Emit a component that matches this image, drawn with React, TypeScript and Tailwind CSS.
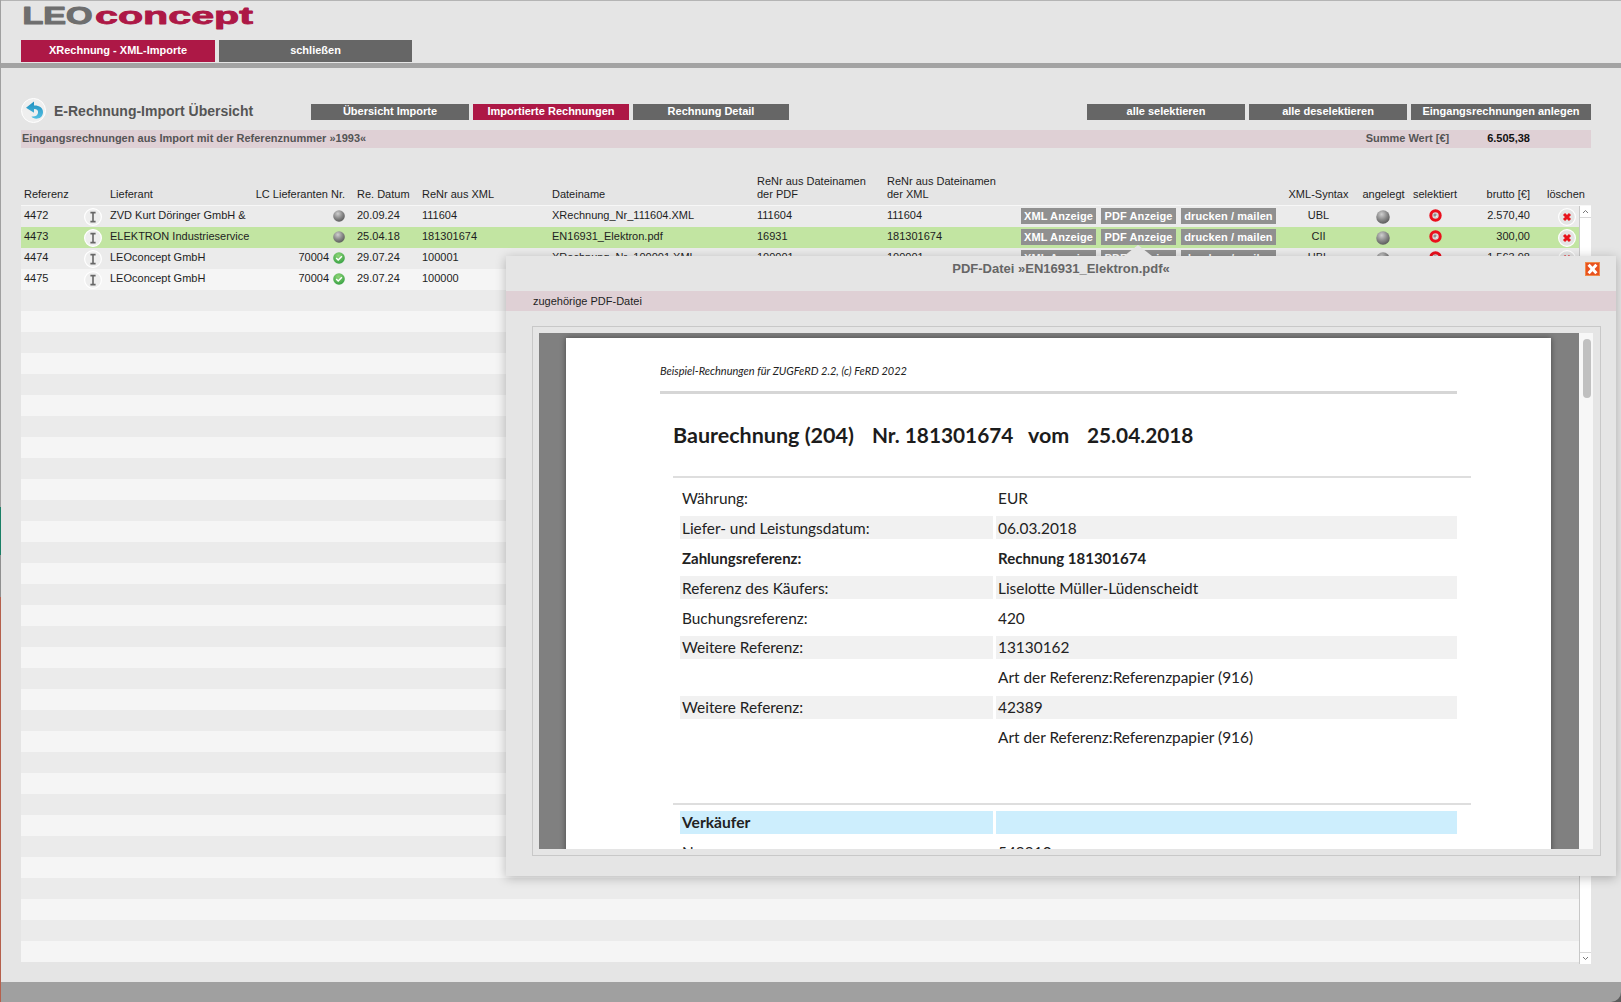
import React from "react";

const GRID =
  "grid grid-cols-[59px_27px_143px_95px_75px_130px_205px_130px_133px_264px_73px_55px_50px_70px_49px]";
const HEADGRID =
  "grid grid-cols-[59px_27px_143px_95px_75px_130px_205px_130px_133px_264px_73px_55px_50px_70px_61px]";

function Logo() {
  return (
    <svg width="240" height="39" viewBox="0 0 240 39" className="block">
      <text x="1.5" y="23" fontFamily="Liberation Sans" fontWeight="700" fontSize="24" fill="#6e6e6e" stroke="#6e6e6e" strokeWidth="1.1" strokeLinejoin="round" textLength="70" lengthAdjust="spacingAndGlyphs">LEO</text>
      <text x="74" y="23" fontFamily="Liberation Sans" fontWeight="700" fontSize="23" fill="#ad1846" stroke="#ad1846" strokeWidth="0.8" strokeLinejoin="round" textLength="158" lengthAdjust="spacingAndGlyphs">concept</text>
    </svg>
  );
}

function BackIcon() {
  return (
    <svg width="25" height="25" viewBox="0 0 25 25" className="shrink-0">
      <defs>
        <linearGradient id="bk" x1="0" y1="0" x2="0" y2="1">
          <stop offset="0" stopColor="#1f8fbf" />
          <stop offset="1" stopColor="#52bfe2" />
        </linearGradient>
      </defs>
      <circle cx="12.5" cy="12.5" r="12" fill="#efefef" stroke="#ffffff" strokeWidth="1" />
      <path d="M13 3.5 L5 9.8 L13 14.8 L13 11 C16 11 17.5 12.6 17 15 C16.5 17.6 14 19 10.5 18.5 C12.5 21.8 21.5 22 22 14.5 C22.3 9.8 18 7.4 13 7.6 Z" fill="url(#bk)" />
    </svg>
  );
}

function Sphere({ size = 12 }: { size?: number }) {
  return (
    <svg width={size} height={size} viewBox="0 0 12 12" className="shrink-0">
      <defs>
        <radialGradient id="sph" cx="0.4" cy="0.3" r="0.75">
          <stop offset="0" stopColor="#cfcfcf" />
          <stop offset="0.55" stopColor="#888888" />
          <stop offset="1" stopColor="#565656" />
        </radialGradient>
      </defs>
      <circle cx="6" cy="6" r="5.8" fill="url(#sph)" />
    </svg>
  );
}

function CheckIcon() {
  return (
    <svg width="12" height="12" viewBox="0 0 12 12" className="shrink-0">
      <defs>
        <radialGradient id="chk" cx="0.45" cy="0.3" r="0.8">
          <stop offset="0" stopColor="#8fd678" />
          <stop offset="1" stopColor="#2c9a3c" />
        </radialGradient>
      </defs>
      <circle cx="6" cy="6" r="5.8" fill="url(#chk)" />
      <path d="M3.2 6 L5.2 8 L8.9 4.2" fill="none" stroke="#ffffff" strokeWidth="1.5" />
    </svg>
  );
}

function SelectIcon() {
  return (
    <svg width="13" height="13" viewBox="0 0 13 13" className="shrink-0">
      <circle cx="6.5" cy="6.5" r="4.7" fill="#d6d6d6" stroke="#ea0f1c" strokeWidth="3" />
      <circle cx="6" cy="6" r="1.6" fill="#8e8e8e" />
      <circle cx="7.4" cy="7.2" r="0.7" fill="#f4f4f4" />
    </svg>
  );
}

function EditIcon() {
  return (
    <svg width="18" height="18" viewBox="0 0 18 18" className="shrink-0">
      <circle cx="9" cy="9" r="8.4" fill="#eeeeee" stroke="#ffffff" strokeWidth="1.2" />
      <path d="M6.4 4.6 H11.6 M9 4.6 V13.6 M6.4 13.6 H11.6" fill="none" stroke="#666666" strokeWidth="1.6" />
    </svg>
  );
}

function DeleteIcon() {
  return (
    <svg width="18" height="18" viewBox="0 0 18 18" className="shrink-0">
      <circle cx="9" cy="9" r="8.4" fill="#e4e4e4" stroke="#ffffff" strokeWidth="1.2" />
      <path d="M6 6 L12 12 M12 6 L6 12" fill="none" stroke="#e8141c" strokeWidth="3" />
    </svg>
  );
}

function CloseIcon() {
  return (
    <svg width="15" height="14" viewBox="0 0 15 14" className="block">
      <rect x="0" y="0" width="15" height="14" fill="#e8521f" />
      <rect x="0.5" y="0.5" width="14" height="13" fill="none" stroke="#f08a4a" />
      <path d="M3.6 2.8 L11.4 11.2 M11.4 2.8 L3.6 11.2" fill="none" stroke="#ffffff" strokeWidth="3" />
    </svg>
  );
}

type Row = {
  ref: string;
  sup: string;
  lc: string;
  date: string;
  xml: string;
  file: string;
  pdfNr: string;
  xmlNr: string;
  syntax: string;
  sum: string;
  green?: boolean;
};

const rows: Row[] = [
  { ref: "4472", sup: "ZVD Kurt Döringer GmbH &", lc: "", date: "20.09.24", xml: "111604", file: "XRechnung_Nr_111604.XML", pdfNr: "111604", xmlNr: "111604", syntax: "UBL", sum: "2.570,40" },
  { ref: "4473", sup: "ELEKTRON Industrieservice", lc: "", date: "25.04.18", xml: "181301674", file: "EN16931_Elektron.pdf", pdfNr: "16931", xmlNr: "181301674", syntax: "CII", sum: "300,00", green: true },
  { ref: "4474", sup: "LEOconcept GmbH", lc: "70004", date: "29.07.24", xml: "100001", file: "XRechnung_Nr_100001.XML", pdfNr: "100001", xmlNr: "100001", syntax: "UBL", sum: "1.563,98" },
  { ref: "4475", sup: "LEOconcept GmbH", lc: "70004", date: "29.07.24", xml: "100000", file: "XRechnung_Nr_100000.XML", pdfNr: "100000", xmlNr: "100000", syntax: "UBL", sum: "2.071,00" },
];

const emptyRows = Array.from({ length: 32 }, (_, i) => i + 4);

function RowBtn({ w, children }: { w: string; children: React.ReactNode }) {
  return (
    <div className={`${w} h-[16px] bg-[#909090] text-white font-bold text-[11px] tracking-[0.1px] leading-[17px] text-center whitespace-nowrap`}>
      {children}
    </div>
  );
}

function DataRow({ r, index }: { r: Row; index: number }) {
  const bg = r.green ? "bg-[#c2e5a2]" : index % 2 === 0 ? "bg-[#ebebeb]" : "bg-[#f5f5f5]";
  return (
    <div className={`${GRID} ${bg} h-[21px] items-center text-[11px] text-[#1e1e1e] whitespace-nowrap`}>
      <div className="pl-[3px] pb-[2px]">{r.ref}</div>
      <div className="flex justify-center pr-[1px]"><EditIcon /></div>
      <div className="pl-[3px] pb-[2px] overflow-hidden">{r.sup}</div>
      <div className="flex justify-end items-center gap-[4px] pb-[2px]">
        {r.lc ? <span>{r.lc}</span> : null}
        {r.lc ? <CheckIcon /> : <Sphere />}
      </div>
      <div className="pl-[12px] pb-[2px]">{r.date}</div>
      <div className="pl-[2px] pb-[2px]">{r.xml}</div>
      <div className="pl-[2px] pb-[2px]">{r.file}</div>
      <div className="pl-[2px] pb-[2px]">{r.pdfNr}</div>
      <div className="pl-[2px] pb-[2px]">{r.xmlNr}</div>
      <div className="pl-[3px] pb-[2px] flex gap-[5px]">
        <RowBtn w="w-[75px]">XML Anzeige</RowBtn>
        <RowBtn w="w-[75px]">PDF Anzeige</RowBtn>
        <RowBtn w="w-[95px]">drucken / mailen</RowBtn>
      </div>
      <div className="text-center pb-[2px]">{r.syntax}</div>
      <div className="flex justify-center"><Sphere size={14} /></div>
      <div className="flex justify-center pb-[2px]"><SelectIcon /></div>
      <div className="text-right pb-[2px]">{r.sum}</div>
      <div className="flex justify-end pr-[3px]"><DeleteIcon /></div>
    </div>
  );
}

function PdfRow({ left, right, strip, bold }: { left?: string; right: string; strip?: boolean; bold?: boolean }) {
  const cell = `h-[23px] flex items-center pl-[2px] whitespace-nowrap ${strip ? "bg-[#f1f1f1]" : ""} ${bold ? "font-bold text-[15px]" : ""}`;
  return (
    <div className="h-[29.9px] flex items-center gap-[3px]">
      <div className={`w-[313px] ${cell}`}>{left}</div>
      <div className={`w-[461px] ${cell}`}>{right}</div>
    </div>
  );
}

function PageBtn({ w, red, children }: { w: string; red?: boolean; children: React.ReactNode }) {
  return (
    <div className={`${w} h-[16px] ${red ? "bg-[#ad1846]" : "bg-[#666666]"} text-white font-bold text-[11px] leading-[15px] text-center whitespace-nowrap`}>
      {children}
    </div>
  );
}

function Modal() {
  return (
    <div className="absolute left-[506px] top-[256px] w-[1110px] h-[620px] bg-[#e5e5e5] shadow-[0_2px_10px_rgba(0,0,0,0.25)] flex flex-col">
      <div className="absolute left-[618px] top-[-11px] w-0 h-0 border-x-[14px] border-x-transparent border-b-[11px] border-b-[#e5e5e5]" />
      <div className="h-[35px] grid grid-cols-[1fr_auto_1fr] items-center">
        <div />
        <div className="text-[13px] font-bold text-[#666666] pb-[9px] whitespace-nowrap">PDF-Datei »EN16931_Elektron.pdf«</div>
        <div className="justify-self-end mr-[16px] mb-[10px]"><CloseIcon /></div>
      </div>
      <div className="h-[20px] bg-[#dfd0d5] pl-[27px] text-[11px] leading-[21px] text-[#1e1e1e]">zugehörige PDF-Datei</div>
      <div className="mt-[15px] ml-[26px] w-[1069px] h-[530px] border border-[#c8c8c8] pl-[6px] pr-[7px] pt-[6px] pb-[6px]">
        <div className="h-full flex overflow-hidden">
          <div className="w-[1040px] h-full bg-[#808080] pl-[27px] pt-[5px]">
            <div className="w-[985px] h-[600px] bg-white shadow-[0_0_6px_rgba(0,0,0,0.45)] pl-[94px] pt-[26px] font-['Lato',sans-serif] text-[#222222]">
              <div className="text-[11px] italic leading-[14px] text-[#222222]">Beispiel-Rechnungen für ZUGFeRD 2.2, (c) FeRD 2022</div>
              <div className="mt-[13px] w-[797px] h-[3px] bg-[#d6d6d6]" />
              <div className="mt-[26px] ml-[13px] h-[30px] flex items-center text-[20.8px] font-bold text-[#1c1c1c] whitespace-nowrap">
                <span className="w-[199px] text-[21.5px]">Baurechnung (204)</span>
                <span className="w-[156px]">Nr. 181301674</span>
                <span className="w-[59px] text-[21.5px]">vom</span>
                <span>25.04.2018</span>
              </div>
              <div className="mt-[26px] ml-[13px] w-[798px] h-[2px] bg-[#dedede]" />
              <div className="ml-[20px] mt-[5px] text-[15.4px] leading-[20px]">
                <PdfRow left="Währung:" right="EUR" />
                <PdfRow left="Liefer- und Leistungsdatum:" right="06.03.2018" strip />
                <PdfRow left="Zahlungsreferenz:" right="Rechnung 181301674" bold />
                <PdfRow left="Referenz des Käufers:" right="Liselotte Müller-Lüdenscheidt" strip />
                <PdfRow left="Buchungsreferenz:" right="420" />
                <PdfRow left="Weitere Referenz:" right="13130162" strip />
                <PdfRow right="Art der Referenz:Referenzpapier (916)" />
                <PdfRow left="Weitere Referenz:" right="42389" strip />
                <PdfRow right="Art der Referenz:Referenzpapier (916)" />
              </div>
              <div className="mt-[51px] ml-[13px] w-[798px] h-[2px] bg-[#dedede]" />
              <div className="ml-[20px] mt-[3px] text-[15.4px] leading-[20px]">
                <div className="h-[28.9px] flex items-center gap-[3px]">
                  <div className="w-[313px] h-[23px] flex items-center pl-[2px] bg-[#cdeefd] font-bold text-[15.6px]">Verkäufer</div>
                  <div className="w-[461px] h-[23px] bg-[#cdeefd]" />
                </div>
                <PdfRow left="Name:" right="549910" />
              </div>
            </div>
          </div>
          <div className="w-[14px] h-full bg-[#f7f7f7] pt-[6px] pl-[4px]">
            <div className="w-[8px] h-[59px] rounded-full bg-[#c0c0c0]" />
          </div>
        </div>
      </div>
    </div>
  );
}

export default function App() {
  return (
    <div className="relative w-[1621px] h-[1002px] overflow-hidden flex bg-[#e5e5e5] font-['Liberation_Sans',Arial,sans-serif]">
      <div className="w-px shrink-0 flex flex-col">
        <div className="h-[507px] bg-[#a0a0a0]" />
        <div className="h-[48px] bg-[#1a7f66]" />
        <div className="h-[42px] bg-[#8f8f8f]" />
        <div className="flex-1 bg-[#b5604c]" />
      </div>
      <div className="flex-1 flex flex-col border-t border-[#b4b4b4]">
        <div className="h-[39px] pl-[20px]"><Logo /></div>
        <div className="h-[22px] pl-[20px] flex gap-[4px]">
          <div className="w-[194px] bg-[#ad1846] text-white font-bold text-[11px] leading-[21px] text-center">XRechnung - XML-Importe</div>
          <div className="w-[193px] bg-[#666666] text-white font-bold text-[11px] leading-[21px] text-center">schließen</div>
        </div>
        <div className="mt-[1px] h-[5px] bg-[#a3a3a3]" />

        <div className="mt-[30px] h-[25px] ml-[20px] mr-[30px] flex items-center">
          <div className="w-[290px] flex items-center gap-[8px]">
            <BackIcon />
            <span className="text-[14px] font-bold text-[#555555] whitespace-nowrap pt-[2px]">E-Rechnung-Import Übersicht</span>
          </div>
          <div className="flex gap-[4px] mt-[3px]">
            <PageBtn w="w-[158px]">Übersicht Importe</PageBtn>
            <PageBtn w="w-[156px]" red>Importierte Rechnungen</PageBtn>
            <PageBtn w="w-[156px]">Rechnung Detail</PageBtn>
          </div>
          <div className="ml-auto flex gap-[4px] mt-[3px]">
            <PageBtn w="w-[158px]">alle selektieren</PageBtn>
            <PageBtn w="w-[158px]">alle deselektieren</PageBtn>
            <PageBtn w="w-[180px]">Eingangsrechnungen anlegen</PageBtn>
          </div>
        </div>

        <div className="mt-[7px] h-[18px] ml-[20px] mr-[30px] bg-[#dfd0d5] flex items-center text-[11px] font-bold text-[#555555] whitespace-nowrap">
          <span className="pl-[1px] pb-[1px]">Eingangsrechnungen aus Import mit der Referenznummer »1993«</span>
          <span className="ml-auto pb-[1px]">Summe Wert [€]</span>
          <span className="ml-[38px] mr-[61px] pb-[1px] text-[#111111]">6.505,38</span>
        </div>

        <div className={`${HEADGRID} h-[57px] ml-[20px] mr-[30px] items-end pb-[4px] text-[11px] leading-[13px] text-[#1e1e1e]`}>
          <div className="pl-[3px]">Referenz</div>
          <div />
          <div className="pl-[3px]">Lieferant</div>
          <div className="text-right whitespace-nowrap">LC Lieferanten Nr.</div>
          <div className="pl-[12px]">Re. Datum</div>
          <div className="pl-[2px]">ReNr aus XML</div>
          <div className="pl-[2px]">Dateiname</div>
          <div className="pl-[2px] pr-[2px]">ReNr aus Dateinamen der PDF</div>
          <div className="pl-[2px] pr-[6px]">ReNr aus Dateinamen der XML</div>
          <div />
          <div className="text-center">XML-Syntax</div>
          <div className="text-center pl-[2px]">angelegt</div>
          <div className="text-center">selektiert</div>
          <div className="text-right">brutto [€]</div>
          <div className="pl-[17px]">löschen</div>
        </div>

        <div className="ml-[20px] mr-[30px] h-[759px] flex border-t border-[#f7f7f7]">
          <div className="w-[1558px] h-[756px] flex flex-col">
            {rows.map((r, i) => (
              <DataRow key={r.ref} r={r} index={i} />
            ))}
            {emptyRows.map((i) => (
              <div key={i} className={`h-[21px] shrink-0 ${i % 2 === 0 ? "bg-[#ebebeb]" : "bg-[#f5f5f5]"}`} />
            ))}
          </div>
          <div className="w-[12px] h-[758px] bg-white border-l border-[#c8c8c8] flex flex-col justify-between">
            <div className="h-[12px] border-b border-[#d8d8d8] flex items-center justify-center">
              <svg width="7" height="5" viewBox="0 0 7 5"><path d="M1 4 L3.5 1.5 L6 4" fill="none" stroke="#777777" strokeWidth="1" /></svg>
            </div>
            <div className="h-[12px] border-t border-[#d8d8d8] flex items-center justify-center">
              <svg width="7" height="5" viewBox="0 0 7 5"><path d="M1 1 L3.5 3.5 L6 1" fill="none" stroke="#777777" strokeWidth="1" /></svg>
            </div>
          </div>
        </div>

        <div className="h-[18px] shrink-0" />
        <div className="flex-1 bg-[#5c5c5c]">
          <div className="h-full bg-[#a0a0a0] rounded-br-[10px]" />
        </div>
      </div>
      <Modal />
    </div>
  );
}
